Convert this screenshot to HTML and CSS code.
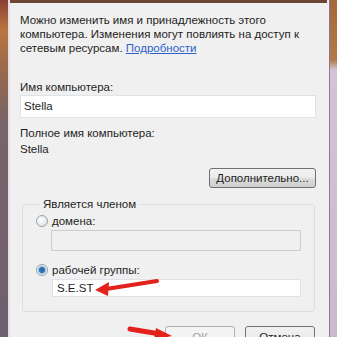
FILE: index.html
```html
<html>
 <head>
	<meta charset="UTF-8">
	<title>Имя компьютера</title>
	<link rel="stylesheet" href="styles.css">
 </head>
 <body>
 <div class="window">
	<div class="frame frame-left"></div>
	<div class="panel">
		<p class="intro">Можно изменить имя и принадлежность этого компьютера. Изменения могут повлиять на доступ к сетевым ресурсам. <a href="#">Подробности</a></p>

		<div class="label label-name">Имя компьютера:</div>
		<div class="field field-name">Stella</div>

		<div class="label label-full">Полное имя компьютера:</div>
		<div class="label">Stella</div>

		<div class="row-right">
			<div class="btn btn-more">Дополнительно...</div>
		</div>

		<fieldset class="group">
			<legend>Является членом</legend>
			<div class="radio-row">
				<span class="radio"></span>
				<span>домена:</span>
			</div>
			<div class="field field-domain"></div>
			<div class="radio-row radio-row2">
				<span class="radio radio-on"></span>
				<span>рабочей группы:</span>
			</div>
			<div class="field field-group">S.E.ST</div>
		</fieldset>

		<div class="buttons">
			<div class="btn btn-ok">ОК</div>
			<div class="btn">Отмена</div>
		</div>
	</div>
	<div class="frame frame-right"></div>

	<!-- красные стрелки поверх окна -->
	<svg class="arrows" width="337" height="337" viewBox="0 0 337 337">
		<path d="M157 281 L106 289" stroke="#e3221c" stroke-width="4" stroke-linecap="round" fill="none"/>
		<path d="M95 290 L109 282 L108 296 Z" fill="#e3221c"/>
		<path d="M130 329 L160 334" stroke="#e3221c" stroke-width="5" stroke-linecap="round" fill="none"/>
		<path d="M172 336 L156 328 L154 340 Z" fill="#e3221c"/>
	</svg>
 </div>
 </body>
</html>
```

FILE: styles.css
```css
	*{margin:0;padding:0;box-sizing:border-box;}
	body{
		width:337px;
		height:337px;
		overflow:hidden;
		font-family:"Liberation Sans", Arial, sans-serif;
		font-size:11.5px;
		color:#1e1e1e;
		background:#7a6a6a;
	}

	.window{
		position:relative;
		display:flex;
		width:337px;
		height:337px;
		overflow:hidden;
	}

	.frame{ width:10px; }
	.frame-left{
		background:linear-gradient(to bottom,#8c3f33 0,#b8763f 30px,#9a6a4c 70px,#786468 120px,#6e6070 337px);
		border-right:2px solid #e8dde8;
	}
	.frame-right{
		background:linear-gradient(to bottom,#a4683a 0,#b07a48 60px,#d5c2d6 70px,#cdb8cf 337px);
		border-left:2px solid #f4eef4;
		box-shadow:inset 1px 0 0 #8a7a8a;
	}

	.panel{
		flex:1;
		background:#f0f0f0;
		border-top:3px solid #6b4634;
		padding:10px 11px 0 10px;
	}

	.intro{
		line-height:14px;
		padding-right:10px;
	}
	.intro a{ color:#2a62c8; }

	.label{ line-height:16px; }
	.label-name{ margin-top:25px; line-height:14px; }
	.label-full{ margin-top:7px; }

	.field{
		background:#fff;
		border:1px solid #dfe3e8;
		height:23px;
		line-height:21px;
		padding-left:3px;
	}
	.field-name{ margin-top:1px; }

	.row-right{
		display:flex;
		justify-content:flex-end;
		margin-top:11px;
	}

	.btn{
		width:70px;
		height:22px;
		line-height:20px;
		text-align:center;
		border:1px solid #707070;
		border-radius:3px;
		background:linear-gradient(to bottom,#f2f2f2 0,#ebebeb 50%,#dddddd 51%,#cfcfcf 100%);
	}
	.btn-more{
		width:107px;
		height:20px;
		line-height:18px;
	}

	.group{
		margin:9px 1px 0 2px;
		border:1px solid #d8dfe4;
		border-radius:3px;
		padding:3px 13px 14px 13px;
	}
	.group legend{
		margin-left:4px;
		padding:0 3px;
		line-height:14px;
	}

	.radio-row{
		display:flex;
		align-items:center;
		gap:4px;
		line-height:14px;
	}
	.radio-row2{ margin-top:12px; }

	.radio{
		width:12px;
		height:12px;
		border-radius:50%;
		border:1px solid #9aa3ab;
		background:radial-gradient(circle at 40% 40%,#ffffff 0,#e8eaec 60%,#c8ccd0 100%);
	}
	.radio-on{
		background:radial-gradient(circle,#1f5c9a 0,#3c86c8 3px,#e8ecef 4px,#cdd3d8 100%);
	}

	.field-domain{
		margin:2px 0 0 15px;
		height:21px;
		background:#f0f0f0;
		border-color:#c9ced3;
	}
	.field-group{
		margin:2px 0 0 16px;
		height:18px;
		line-height:16px;
		font-size:11.5px;
		padding-left:4px;
	}

	.buttons{
		display:flex;
		justify-content:flex-end;
		gap:10px;
		margin-top:14px;
		padding-right:1px;
	}
	.btn-ok{
		color:#a0a0a0;
		border-color:#b0b0b0;
		background:#f4f4f4;
	}

	.arrows{
		position:absolute;
		left:0;
		top:0;
	}
```
